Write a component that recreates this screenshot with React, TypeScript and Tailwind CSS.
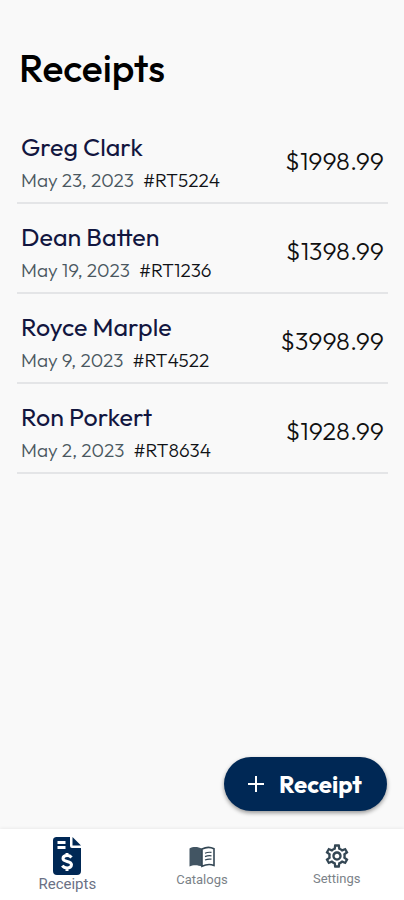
import { MdOutlineSettings } from "react-icons/md";

const receipts = [
  { name: "Greg Clark", date: "May 23, 2023", id: "#RT5224", total: "$1998.99" },
  { name: "Dean Batten", date: "May 19, 2023", id: "#RT1236", total: "$1398.99" },
  { name: "Royce Marple", date: "May 9, 2023", id: "#RT4522", total: "$3998.99" },
  { name: "Ron Porkert", date: "May 2, 2023", id: "#RT8634", total: "$1928.99" },
];

function InvoiceIcon() {
  return (
    <svg aria-hidden="true" viewBox="0 0 30 39" className="h-[39px] w-[30px]" fill="none">
      <path fill="#002855" d="M4 1H18V10a2 2 0 0 0 2 2H29V35a4 4 0 0 1-4 4H5a4 4 0 0 1-4-4V4.500A3.500 3.500 0 0 1 4 1Z" />
      <path fill="#002855" d="M20.500 1L29 9.500H20.500Z" />
      <path stroke="#fff" strokeWidth="3" d="M5.500 6.500H13.500M5.500 11.500H13.500" />
      <path
        stroke="#fff"
        strokeWidth="3"
        d="M19.500 21.500C18.500 20.200 17 19.600 15 19.600C12.600 19.600 11 20.900 11 22.600C11 26.500 19.500 24.500 19.500 28.800C19.500 30.800 17.500 32 15.200 32C13 32 11.400 31.200 10.300 29.600M15 17V20M15 31.500V35"
      />
    </svg>
  );
}

function CatalogIcon() {
  return (
    <svg aria-hidden="true" viewBox="0 0 26 28" className="h-[28px] w-[26px]" fill="none">
      <path fill="#425563" d="M0.500 5.500C4 3.600 9 3.600 13 5.800V23.800C9 21.800 4 21.800 0.500 23.600Z" />
      <path stroke="#344754" strokeWidth="1.600" d="M13 6C17 4 21.500 3.900 25 5.800V22.400C21.500 21 17 21.300 13 23.200Z" />
      <path stroke="#344754" strokeWidth="1.200" d="M16 10.200C18 9.300 20.500 9.100 22.500 9.400M16 13.600C18 12.700 20.500 12.500 22.500 12.800M16 17C18 16.100 20.500 15.900 22.500 16.200" />
    </svg>
  );
}

export default function App() {
  return (
    <div className="flex min-h-screen flex-col bg-[#f9f9f9] font-[Outfit,Lato,sans-serif]">
      <main className="flex flex-1 flex-col px-4 pt-[46px] pb-[18px]">
        <h1 className="px-[3px] text-[39px] leading-[44px] font-medium text-black">Receipts</h1>
        <ul className="mt-6">
          {receipts.map((r) => (
            <li key={r.id} className="ml-px flex h-[90px] items-center justify-between border-b-2 border-[#e4e5e7] pr-1 pl-1">
              <div className="pt-[11px]">
                <h2 className="text-[25px] leading-8 text-[#12163f]">{r.name}</h2>
                <p className="flex gap-[9px] text-[19px] leading-[34px] font-light text-[#4a575f]">
                  <span>{r.date}</span>
                  <span className="text-[#101216]">{r.id}</span>
                </p>
              </div>
              <span className="pt-1.5 text-[25px] leading-8 font-light text-[#101010]">{r.total}</span>
            </li>
          ))}
        </ul>
        <button
          type="button"
          className="mt-auto mr-px flex h-[54px] w-[163px] items-center justify-center gap-3.5 self-end rounded-full bg-[#002855] pr-0.5 text-white shadow-[0_2px_4px_rgba(0,0,0,0.4)]"
        >
          <svg aria-hidden="true" viewBox="0 0 18 18" className="size-[18px]" fill="none" stroke="currentColor" strokeWidth="2">
            <path d="M9 1v16M1 9h16" />
          </svg>
          <span className="text-[24px] leading-8 font-bold">Receipt</span>
        </button>
      </main>
      <nav className="grid h-[71px] grid-cols-3 bg-white font-[Roboto,sans-serif] text-[#7b8288] shadow-[0_-1px_3px_rgba(0,0,0,0.06)]">
        <a href="#receipts" aria-current="page" className="flex flex-col items-center pt-[7px] text-[15px] leading-[18px] text-[#6b7185]">
          <InvoiceIcon />
          Receipts
        </a>
        <a href="#catalogs" className="flex flex-col items-center pt-[14px] text-[13px] leading-[18px]">
          <CatalogIcon />
          Catalogs
        </a>
        <a href="#settings" className="flex flex-col items-center pt-[13px] text-[13px] leading-[18px]">
          <MdOutlineSettings className="size-[28px] text-[#344754]" />
          Settings
        </a>
      </nav>
    </div>
  );
}
